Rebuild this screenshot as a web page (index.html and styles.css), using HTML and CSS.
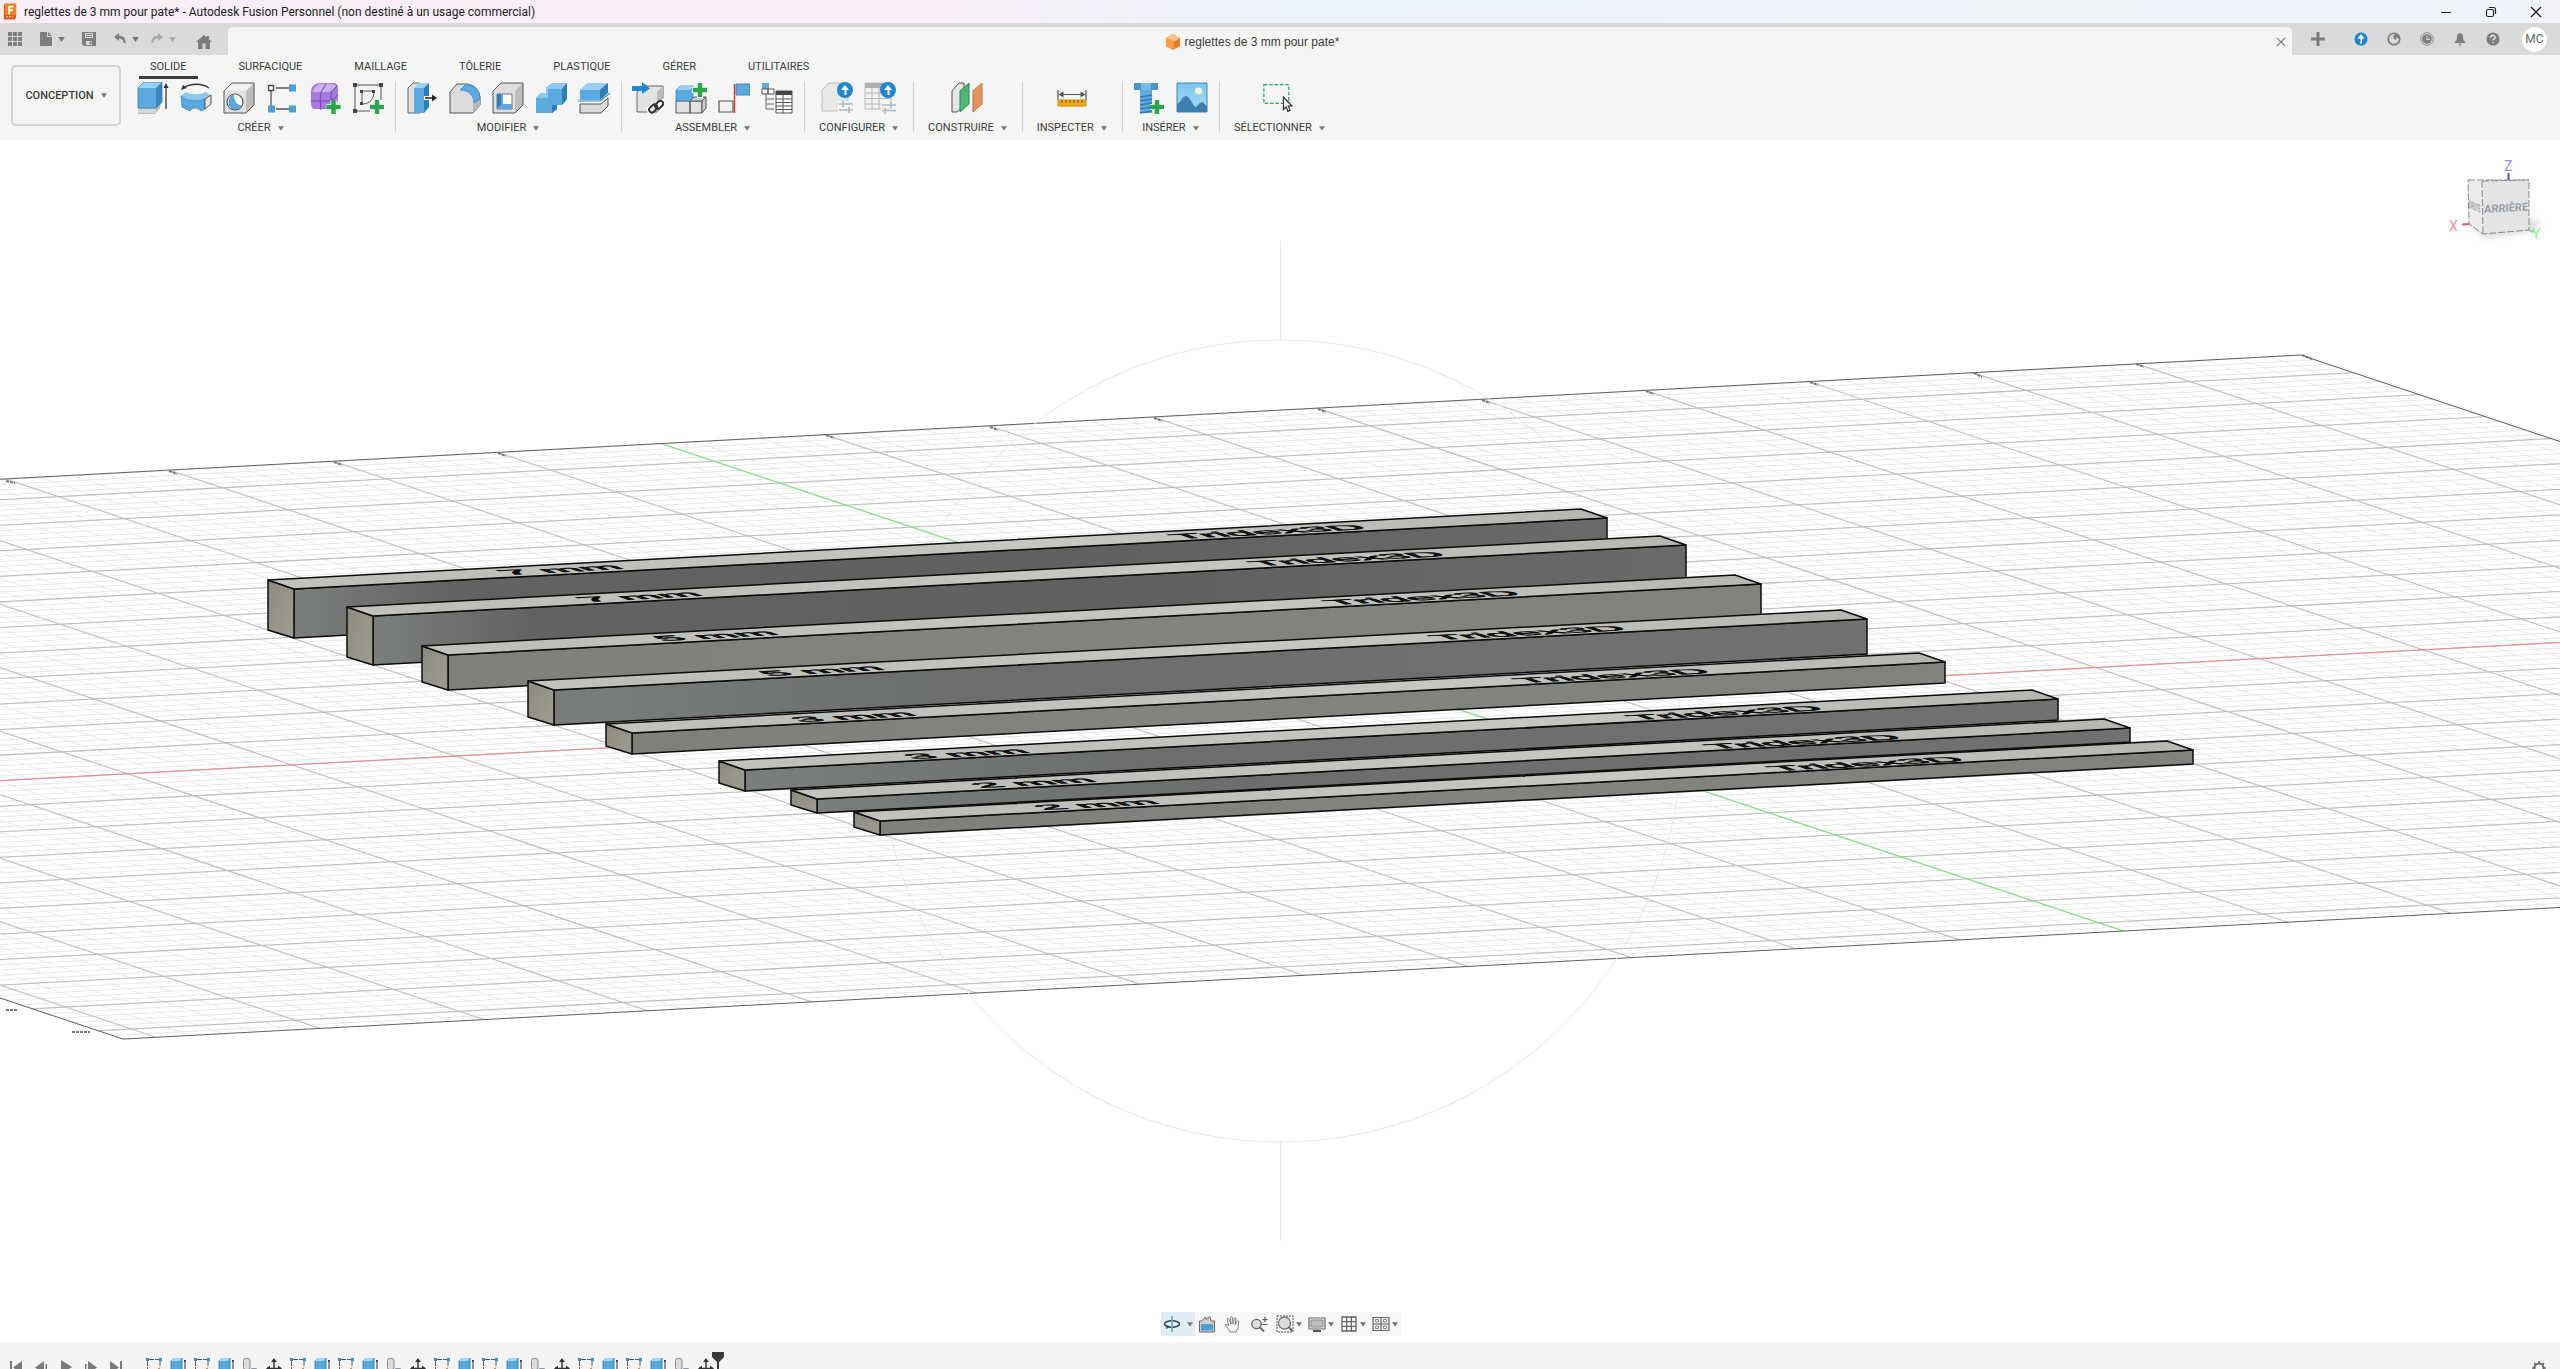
FILE: index.html
```html
<!DOCTYPE html>
<html lang="fr">
<head>
<meta charset="utf-8">
<title>reglettes de 3 mm pour pate* - Autodesk Fusion Personnel</title>
<link rel="stylesheet" href="styles.css">
</head>
<body>
<svg class="defs" aria-hidden="true">
  <defs>
    <linearGradient id="g-top" x1="0" x2="1"><stop offset="0" stop-color="#c4c5c0"/><stop offset=".08" stop-color="#bdbeba"/><stop offset=".6" stop-color="#c6c7c3"/><stop offset="1" stop-color="#b6b7b2"/></linearGradient>
    <linearGradient id="g-end" x1="0" x2="1" y2="1"><stop offset="0" stop-color="#8c8a7e"/><stop offset="1" stop-color="#9f9d92"/></linearGradient>
    <linearGradient id="g-dark" x1="0" x2="1"><stop offset="0" stop-color="#7b7f7b"/><stop offset=".12" stop-color="#626361"/><stop offset=".6" stop-color="#60615f"/><stop offset="1" stop-color="#6a6b69"/></linearGradient>
    <linearGradient id="g-mid" x1="0" x2="1"><stop offset="0" stop-color="#7a7e7a"/><stop offset=".3" stop-color="#6b6e6b"/><stop offset="1" stop-color="#6f726f"/></linearGradient>
    <linearGradient id="g-light" x1="0" x2="1"><stop offset="0" stop-color="#7d807b"/><stop offset=".4" stop-color="#82857f"/><stop offset="1" stop-color="#7f827d"/></linearGradient>
    <linearGradient id="g-img" x2="0" y2="1"><stop offset="0" stop-color="#7cc4f2"/><stop offset="1" stop-color="#a8dcf8"/></linearGradient>
  </defs>
  <symbol id="caret" viewBox="0 0 8 6"><path d="M0 0h8L4 6z" fill="currentColor"/></symbol>
  <symbol id="i-app" viewBox="0 0 16 18"><path d="M2 0h13v16l-2 2H1V2z" fill="#e0561b"/><path d="M2 0h13v13H2z" fill="#f58220"/><path d="M6 2.500h6v2H8V6.500h3.500v2H8V12H6z" fill="#fff"/><path d="M4 15h7" stroke="#fff" stroke-width="1.200" stroke-dasharray="2 1"/></symbol>
  <symbol id="i-grid9" viewBox="0 0 14 14"><path d="M0 0h4v4H0zm5 0h4v4H5zm5 0h4v4h-4zM0 5h4v4H0zm5 0h4v4H5zm5 0h4v4h-4zM0 10h4v4H0zm5 0h4v4H5zm5 0h4v4h-4z" fill="currentColor"/></symbol>
  <symbol id="i-file" viewBox="0 0 14 14"><path d="M1 0h7v5h5v9H1z" fill="currentColor"/><path d="M9 0l4 4H9z" fill="currentColor"/></symbol>
  <symbol id="i-save" viewBox="0 0 14 14"><path d="M0 0h14v14H2l-2-2zM3 1v5h8V1zM4 9v4h6V9z" fill="currentColor" fill-rule="evenodd"/><path d="M4 2.500h6M4 4.500h6M8 10h1v2H8z" stroke="currentColor" fill="none"/></symbol>
  <symbol id="i-undo" viewBox="0 0 14 14"><path d="M1 5l5-4v2.700c4 0 7 2.500 6.500 7.300h-2C10.500 8 9 6.500 6 6.500V9z" fill="currentColor"/></symbol>
  <symbol id="i-redo" viewBox="0 0 14 14"><path d="M13 5L8 1v2.700C4 3.700 1 6.200 1.500 11h2C3.500 8 5 6.500 8 6.500V9z" fill="currentColor"/></symbol>
  <symbol id="i-home" viewBox="0 0 16 14"><path d="M8 0l3 2.500V1h2v3.200L16 7h-2v7H2V7H0z" fill="currentColor"/><path d="M6.500 8.500h3V14h-3z" fill="#dadada"/></symbol>
  <symbol id="i-part" viewBox="0 0 14 16"><path d="M7 0l7 4v8l-7 4-7-4V4z" fill="#f07b1c"/><path d="M7 0l7 4-6 3.500L0 4z" fill="#ffc48a"/><path d="M0 4l8 3.500V16L0 12z" fill="#fb9a48"/></symbol>
  <symbol id="i-x" viewBox="0 0 12 12"><path d="M1 1l10 10M11 1L1 11" stroke="currentColor" stroke-width="1.400" fill="none"/></symbol>
  <symbol id="i-plus" viewBox="0 0 14 14"><path d="M7 0v14M0 7h14" stroke="currentColor" stroke-width="3"/></symbol>
  <symbol id="i-min" viewBox="0 0 12 12"><path d="M1 6.500h10" stroke="currentColor"/></symbol>
  <symbol id="i-max" viewBox="0 0 12 12"><path d="M1.500 5c0-1 .5-1.500 1.500-1.500h4c1 0 1.500.5 1.500 1.500v4c0 1-.5 1.500-1.500 1.500H3c-1 0-1.500-.5-1.500-1.500zM4 1.500h4.500c1.500 0 2 .5 2 2V8" stroke="currentColor" stroke-width="1.200" fill="none"/></symbol>
  <symbol id="i-up" viewBox="0 0 16 16"><circle cx="8" cy="8" r="7.500" fill="#1e86d2"/><path d="M8 2.500l4 5H9.500L9 13H7l.5-5.500H4z" fill="#fff"/></symbol>
  <symbol id="i-ext" viewBox="0 0 16 16"><circle cx="8" cy="8" r="6.500" fill="none" stroke="currentColor" stroke-width="2"/><path d="M8 8l-1-3 3-3 5 3-1 3-3-2-1 3z" fill="currentColor"/></symbol>
  <symbol id="i-clock" viewBox="0 0 16 16"><circle cx="8" cy="8" r="7.200" fill="none" stroke="currentColor"/><circle cx="8" cy="8" r="5.500" fill="currentColor"/><path d="M8 4.500V8.500h3.500" stroke="#dadada" stroke-width="1.400" fill="none"/></symbol>
  <symbol id="i-bell" viewBox="0 0 16 16"><path d="M8 1c3 .5 3.500 3 3.500 5.500 0 2.500 1 3.500 2.500 5v1H2v-1c1.500-1.500 2.500-2.500 2.500-5C4.500 4 5 1.500 8 1zM6 13.500h4L8 16z" fill="currentColor"/></symbol>
  <symbol id="i-help" viewBox="0 0 16 16"><circle cx="8" cy="8" r="7.500" fill="currentColor"/><path d="M5.500 6.500c0-3.500 5-3.500 5-.5 0 1.800-2.400 2-2.400 3.700M8 11v1.800" stroke="#e4e4e4" stroke-width="1.700" fill="none"/></symbol>

  <symbol id="r-extrude" viewBox="0 0 32 32"><path d="M1 27l6-4 17-1-1 4-5 6H1z" fill="#b9b9b9"/><path d="M1 27h18v4H1z" fill="#d6d6d6"/><path d="M1 6l6-6h18l-6 6z" fill="#9bd0f3"/><path d="M1 6h18v20H1z" fill="#5ba9df"/><path d="M19 6l6-6v20l-6 6z" fill="#3a86be"/><path d="M1 6l6-6h18v20l-6 6H1z" fill="none" stroke="#2f7db8" stroke-width=".8"/><path d="M29 27V3" stroke="#333" stroke-width="1.300"/><path d="M26.500 6L29 1l2.500 5z" fill="#333"/></symbol>
  <symbol id="r-revolve" viewBox="0 0 32 32"><path d="M3 6c8-5 19-5 26 0" fill="none" stroke="#333" stroke-width="1.300"/><path d="M1 8l2-5 4 3z" fill="#333"/><path d="M1 14l5-4c6 3 14 3 20 0l6 4-4 4c-7 3-17 3-23 0z" fill="#8cc8f0"/><path d="M1 14c4 3 6 4 10 4.500 4 .8 8 .5 14-1.500v10l-4 2c-4-4-8-4-11 0l-8-4z" fill="#5ba9df" stroke="#3a86be" stroke-width=".7"/><path d="M25 17l6-4v9l-6 5z" fill="#e8e8e8" stroke="#555"/></symbol>
  <symbol id="r-hole" viewBox="0 0 32 32"><path d="M1 9l8-8h22l-8 8z" fill="#f0f0f0"/><path d="M1 9h22v22H1z" fill="#e2e2e2"/><path d="M23 9l8-8v22l-8 8z" fill="#bdbdbd"/><path d="M1 9l8-8h22v22l-8 8H1z" fill="none" stroke="#555"/><circle cx="12" cy="20" r="8" fill="#fff" stroke="#555" stroke-width="1.200"/><path d="M10 13c1 7 4 11 9 11-3 6-12 4-13-3 0-4 2-7 4-8z" fill="#5ba9df" stroke="#2f7db8" stroke-width=".7"/></symbol>
  <symbol id="r-pattern" viewBox="0 0 32 32"><path d="M10 6h14M5 9v15M10 27h14" stroke="#555" stroke-width="1.300"/><path d="M2.500 3.500h5v5h-5z" fill="#fff" stroke="#444" stroke-width="1.300"/><path d="M23 2.500h7v7h-7zM2 23.500h7v7H2zM23 23.500h7v7h-7z" fill="#4a9fd8"/></symbol>
  <symbol id="r-form" viewBox="0 0 32 32"><path d="M2 10c0-6 4-9 9-9h13c4 0 5 2 5 6v12l-6 8H7c-4 0-5-2-5-6z" fill="#a57be0"/><path d="M4 9c2-4 4-7 8-7h11c3 0 4 2 4 3l-6 5H4z" fill="#cdb2f2"/><path d="M2 19h20l7-6M12 28c-1-7-1-12 0-18l5-8M22 27V10l6-6" fill="none" stroke="#6d44a8"/><path d="M24.500 18v14M17.500 25h14" stroke="#fff" stroke-width="6"/><path d="M24.500 18v14M17.500 25h14" stroke="#2da44e" stroke-width="4.500"/></symbol>
  <symbol id="r-sketch" viewBox="0 0 32 32"><path d="M3 3h26M3 3v26M3 29h15M29 3v15" stroke="#555" fill="none"/><path d="M10 9h12c0 8-4 13-12 13z" fill="none" stroke="#555"/><path d="M1 1h4v4H1zM27 1h4v4h-4zM1 27h4v4H1zM8 8h3v3H8zM20 8h3v3h-3zM8 20h3v3H8z" fill="#444"/><path d="M25 18v14M18 25h14" stroke="#fff" stroke-width="6"/><path d="M25 18v14M18 25h14" stroke="#2da44e" stroke-width="4.500"/></symbol>

  <symbol id="r-press" viewBox="0 0 32 32"><path d="M2 6l5-5h7v30H2z" fill="#e0e0e0" stroke="#666"/><path d="M8 6h10v25H8z" fill="#5ba9df"/><path d="M8 6l5-5h10l-5 5z" fill="#9bd0f3"/><path d="M18 6l5-5v24l-5 6z" fill="#2f7db8"/><path d="M18 16h10" stroke="#fff" stroke-width="4"/><path d="M19 16h8" stroke="#222" stroke-width="1.500"/><path d="M26 12.500l5 3.500-5 3.500z" fill="#222"/></symbol>
  <symbol id="r-fillet" viewBox="0 0 32 32"><path d="M1 10l7-8h8c9 0 15 6 15 15v6l-7 8H1z" fill="#dcdcdc" stroke="#555"/><path d="M24 31l7-8v-6l-7 2z" fill="#b7b7b7"/><path d="M11 8l6-6c8 1 14 7 14 15l-6 4c0-7-5-13-14-13z" fill="#5ba9df" stroke="#3a86be" stroke-width=".7"/></symbol>
  <symbol id="r-shell" viewBox="0 0 32 32"><path d="M1 9l8-8h22v22l-8 8H1z" fill="#dedede"/><path d="M23 9l8-8v22l-8 8z" fill="#bcbcbc"/><path d="M1 9l8-8h22v22l-8 8H1z" fill="none" stroke="#555"/><path d="M5 12h15v15H5z" fill="#fff" stroke="#777"/><path d="M5 12h6v10h9v5H5z" fill="#5ba9df"/><path d="M5 12h4v10l-4 5z" fill="#2f7db8"/></symbol>
  <symbol id="r-combine" viewBox="0 0 32 32"><path d="M1 16l5-5h5V6l6-5h15v16l-5 6h-5v4l-5 4H1z" fill="#4f9fd6"/><path d="M1 16l5-5h5V6l6-5h15l-5 6H13v9z" fill="#8cc8f0"/><path d="M27 7l5-6v16l-5 6h-5v4l-5 4v-8h5z" fill="#2f7db8"/><path d="M13 7h14v16H17v8H1V16h12z" fill="#5ba9df"/></symbol>
  <symbol id="r-split" viewBox="0 0 32 32"><path d="M2 8l8-7h20v10l-8 7H2z" fill="#5ba9df"/><path d="M2 8l8-7h20l-8 7z" fill="#9bd0f3"/><path d="M22 8l8-7v10l-8 7z" fill="#2f7db8"/><path d="M1 20h21l9-8" fill="none" stroke="#fff" stroke-width="3"/><path d="M0 19h22l10-8" fill="none" stroke="#2f7db8" stroke-width="1.200"/><path d="M2 22h21l7-6v8l-7 7H2z" fill="#dadada" stroke="#555"/></symbol>

  <symbol id="r-insert" viewBox="0 0 32 32"><path d="M5 10l7-6h19v19l-6 7H5z" fill="#e2e2e2" stroke="#666"/><path d="M25 10l6-6v19l-6 7z" fill="#bbb"/><path d="M0 4h10V0l8 6.500L10 12V9H0z" fill="#1e86d2"/><g fill="none" stroke="#fff" stroke-width="5"><path d="M22 30l-4 1-1-4 5-5M26 24l5-4 1 4-5 4"/></g><g fill="none" stroke="#333" stroke-width="2"><rect x="17" y="24" width="9" height="5.500" rx="2.700" transform="rotate(-45 21 27)"/><rect x="22" y="20" width="9" height="5.500" rx="2.700" transform="rotate(-45 27 22)"/></g></symbol>
  <symbol id="r-newcomp" viewBox="0 0 32 32"><path d="M1 19h14v12H1zM15 19h12v12H15z" fill="#e2e2e2" stroke="#555"/><path d="M15 19l4-4h12l-4 4zM27 19l4-4v11l-4 5z" fill="#cfcfcf" stroke="#555"/><path d="M1 8l4-4h13v11l-3 4H1z" fill="#5ba9df" stroke="#2f7db8" stroke-width=".7"/><path d="M1 8l4-4h13l-3 4z" fill="#9bd0f3"/><path d="M25 0v16M17 8h16" stroke="#fff" stroke-width="6"/><path d="M25 1v14M18 8h14" stroke="#2da44e" stroke-width="4.500"/></symbol>
  <symbol id="r-joint" viewBox="0 0 32 32"><path d="M1 19h14v11H1z" fill="#f4f4f4" stroke="#555" stroke-width="1.200"/><path d="M18 2h14v11H18z" fill="#5ba9df" stroke="#3a86be"/><path d="M16.500 2v29" stroke="#e03a3a" stroke-width="1.500"/></symbol>
  <symbol id="r-bom" viewBox="0 0 32 32"><path d="M1 1h7v6H1z" fill="#5ba9df"/><path d="M1 7h6v5H1zM7 7h6v5H7z" fill="#fff" stroke="#555"/><path d="M5 12v15M5 17h8M5 22h8M5 27h8" stroke="#666" fill="none"/><path d="M15 9h16v22H15z" fill="#fff" stroke="#555"/><path d="M15 9h16v4H15z" fill="#444"/><path d="M15 17h16M15 20.500h16M15 24h16M15 27.500h16M22 13v18" stroke="#555" fill="none"/></symbol>

  <symbol id="r-config" viewBox="0 0 32 32"><path d="M1 8l7-7h19v22l-5 6H1z" fill="#e8e8e8" stroke="#bbb"/><path d="M17 22h15M17 28h15" stroke="#f5f5f5" stroke-width="6"/><path d="M18 22h14M18 28h14M22 19v6M28 25v6" stroke="#a9b8c2" stroke-width="1.600"/><circle cx="24" cy="8" r="8" fill="#1e86d2"/><path d="M24 3l4 5h-2.500v5h-2V8H20z" fill="#fff"/></symbol>
  <symbol id="r-table" viewBox="0 0 32 32"><path d="M1 1h26v26H1z" fill="#f2f2f2" stroke="#bbb"/><path d="M1 1h26v5H1z" fill="#b0b0b0"/><path d="M1 11h26M1 16.500h26M1 22h18M8 6v21M15 6v21" stroke="#b5b5b5"/><path d="M17 23h15M17 29h15" stroke="#f5f5f5" stroke-width="5"/><path d="M18 23h14M18 28.500h14M27 20v6M21 26v6" stroke="#a9b8c2" stroke-width="1.600"/><circle cx="24" cy="8" r="8" fill="#1e86d2"/><path d="M24 3l4 5h-2.500v5h-2V8H20z" fill="#fff"/></symbol>
  <symbol id="r-plane" viewBox="0 0 32 32"><path d="M1 9l7-8h5v22l-7 7H1z" fill="#e6e6e6" stroke="#555"/><path d="M9 9l9-8v21l-9 8z" fill="#4db679" stroke="#2d8a55"/><path d="M22 9l9-8v21l-9 8z" fill="#e59461" stroke="#c2703c"/></symbol>
  <symbol id="r-measure" viewBox="0 0 32 32"><path d="M2 8v10M30 8v10M4 12.500h24" stroke="#555" stroke-width="1.200"/><path d="M2.500 12.500l5-3v6zM29.500 12.500l-5-3v6z" fill="#555"/><path d="M2 18h28v6H2z" fill="#f4a81d" stroke="#d18600"/><path d="M6 18v3M10 18v3M14 18v3M18 18v3M22 18v3M26 18v3" stroke="#7a4d00"/></symbol>
  <symbol id="r-bolt" viewBox="0 0 32 32"><path d="M1 1h24v7H1z" fill="#4a94cb"/><path d="M8 1h10v7H8z" fill="#7ab9e6"/><path d="M7 8h12v23H7z" fill="#5ba9df"/><path d="M7 15l12-2M7 19l12-2M7 23l12-2M7 27l12-2M7 31l12-2" stroke="#2f7db8" stroke-width="1.300"/><path d="M24 18v14M17 25h15" stroke="#fff" stroke-width="6"/><path d="M24 18v14M17 25h14" stroke="#2da44e" stroke-width="4.500"/></symbol>
  <symbol id="r-image" viewBox="0 0 32 32"><path d="M1 1h30v29H1z" fill="url(#g-img)" stroke="#3a86be"/><circle cx="22.500" cy="9" r="3.500" fill="#fdf6c8"/><path d="M1 22c4-1 5-8 9-8s6 9 10 11l4-4c3-2 4 1 7 3v6H1z" fill="#3c7fb0"/></symbol>
  <symbol id="r-select" viewBox="0 0 36 32"><path d="M1 1h28v21H1z" fill="none" stroke="#2fa36b" stroke-width="1.400" stroke-dasharray="4 2"/><path d="M23 15v14l3-3 2 5 2.500-1-2-5h4z" fill="#fff" stroke="#333" stroke-width="1.400"/></symbol>

  <symbol id="n-orbit" viewBox="0 0 18 18"><ellipse cx="9" cy="9" rx="7.500" ry="3.200" fill="none" stroke="#444" stroke-width="1.500"/><path d="M9 1v16" stroke="#5ba9df" stroke-width="1.600"/><path d="M3 14l1-4 3 2z" fill="#444"/></symbol>
  <symbol id="n-look" viewBox="0 0 18 18"><path d="M1.500 6h2l4-4 .5 2.500L12 1.500 13 6h3.500v11h-15z" fill="#d0d0d0" stroke="#666"/><path d="M3 9h12v6.500H3z" fill="#4f9fd6"/></symbol>
  <symbol id="n-hand" viewBox="0 0 18 18"><path d="M6 17c-1-3-3-5-5-7 1-1.500 3 0 4 1L3 4c1-1 2 0 2.500 1l1.500 4-.5-7c1-1 2 0 2 1l.5 6 1.500-6c1-.5 1.800.3 1.500 1.300l-1 5.500 2.500-4c1-.5 1.600.4 1.300 1.200L14 13l-2 4z" fill="#f4f4f4" stroke="#777" stroke-width=".9"/></symbol>
  <symbol id="n-zoom" viewBox="0 0 18 18"><circle cx="6.500" cy="9" r="4.700" fill="#ddd" stroke="#666" stroke-width="1.300"/><path d="M10 12.500l4 4" stroke="#666" stroke-width="2"/><path d="M15 2v5M12.500 4.500h5M12.500 9.500h5" stroke="#555" stroke-width="1.200"/></symbol>
  <symbol id="n-fit" viewBox="0 0 18 18"><path d="M1 1h16v16H1z" fill="none" stroke="#555" stroke-dasharray="2 1"/><circle cx="8.500" cy="8" r="6" fill="#ddd" stroke="#777" stroke-width="1.300"/><path d="M12.500 12l4 4" stroke="#666" stroke-width="2"/></symbol>
  <symbol id="n-screen" viewBox="0 0 18 18"><path d="M1 3h16v11H1z" fill="#f0f0f0" stroke="#666" stroke-width="1.200"/><path d="M3 5h12v7H3z" fill="#bdbdbd" stroke="#888"/><path d="M5 16h8" stroke="#555" stroke-width="2"/></symbol>
  <symbol id="n-grid" viewBox="0 0 18 18"><path d="M2 2h14v14H2zM2 6.700h14M2 11.300h14M6.700 2v14M11.300 2v14" fill="none" stroke="#666" stroke-width="1.300"/></symbol>
  <symbol id="n-views" viewBox="0 0 18 18"><path d="M1 2.500h16v13H1zM9 2.500v13M1 9h16" fill="#f3f3f3" stroke="#666" stroke-width="1.200"/><path d="M3.500 4.500h3v2.500h-3zM11.500 4.500h3v2.500h-3zM3.500 11h3v2.500h-3zM11.500 11h3v2.500h-3z" fill="none" stroke="#888"/></symbol>

  <symbol id="t-sketch" viewBox="0 0 16 16"><path d="M3 1.500h10M1.500 3v12M14 3v6" stroke="#555" stroke-dasharray="5 1" fill="none"/><path d="M0 0h3v3H0zM13 0h3v3h-3z" fill="#3c8fb8"/><path d="M10 16l3-7 2 4v3z" fill="#e05a3a"/></symbol>
  <symbol id="t-extrude" viewBox="0 0 16 16"><path d="M1 3l3-3h8v13l-3 3H1z" fill="#5ba9df" stroke="#2f6f9f" stroke-width=".8"/><path d="M1 3l3-3h8L9 3z" fill="#a8d8f6"/><path d="M15 16V2M14 4l1-2 1 2" stroke="#333" fill="none"/></symbol>
  <symbol id="t-copy" viewBox="0 0 16 16"><rect x="1.500" y=".5" width="6.500" height="11" rx="2" fill="#ddd" stroke="#888"/><path d="M4.500 11.500h4V16h-4zM9.500 10.500h5V16h-5z" fill="#eee" stroke="#8a96a5"/></symbol>
  <symbol id="t-move" viewBox="0 0 16 16"><path d="M8 2v14M1 10.500h14" stroke="#333" stroke-width="1.500"/><path d="M8 0l3 4H5zM0 10.500l4-3v6zM16 10.500l-4-3v6z" fill="#333"/></symbol>
  <symbol id="i-gear" viewBox="0 0 16 16"><circle cx="8" cy="8" r="4.500" fill="none" stroke="currentColor" stroke-width="2"/><path d="M8 1v14M1 8h14M3 3l10 10M13 3L3 13" stroke="currentColor" stroke-width="1.600" stroke-dasharray="2 10 2"/></symbol>
</svg>

<header class="titlebar">
  <svg class="app-icon"><use href="#i-app"/></svg>
  <h1 class="title">reglettes de 3 mm pour pate* - Autodesk Fusion Personnel (non destiné à un usage commercial)</h1>
  <div class="window-controls">
    <button aria-label="Réduire"><svg><use href="#i-min"/></svg></button>
    <button aria-label="Restaurer"><svg><use href="#i-max"/></svg></button>
    <button aria-label="Fermer"><svg><use href="#i-x"/></svg></button>
  </div>
</header>

<div class="quickbar">
  <div class="quick-tools">
    <button aria-label="Panneau de données"><svg><use href="#i-grid9"/></svg></button>
    <button class="with-caret" aria-label="Fichier"><svg><use href="#i-file"/></svg><svg class="caret"><use href="#caret"/></svg></button>
    <button aria-label="Enregistrer"><svg><use href="#i-save"/></svg></button>
    <button class="with-caret" aria-label="Annuler"><svg><use href="#i-undo"/></svg><svg class="caret"><use href="#caret"/></svg></button>
    <button class="with-caret faded" aria-label="Rétablir"><svg><use href="#i-redo"/></svg><svg class="caret"><use href="#caret"/></svg></button>
    <button class="home" aria-label="Accueil"><svg><use href="#i-home"/></svg></button>
  </div>
  <div class="doc-tab">
    <svg class="part-icon"><use href="#i-part"/></svg>
    <span>reglettes de 3 mm pour pate*</span>
    <button class="tab-close" aria-label="Fermer le document"><svg><use href="#i-x"/></svg></button>
  </div>
  <div class="account-tools">
    <button aria-label="Nouveau document"><svg><use href="#i-plus"/></svg></button>
    <button aria-label="Mises à jour"><svg><use href="#i-up"/></svg></button>
    <button aria-label="Extensions"><svg><use href="#i-ext"/></svg></button>
    <button aria-label="État des tâches"><svg><use href="#i-clock"/></svg></button>
    <button aria-label="Notifications"><svg><use href="#i-bell"/></svg></button>
    <button aria-label="Aide"><svg><use href="#i-help"/></svg></button>
    <button class="avatar">MC</button>
  </div>
</div>

<section class="ribbon">
  <button class="workspace">CONCEPTION<svg class="caret"><use href="#caret"/></svg></button>
  <div class="ribbon-main">
    <nav class="tabs">
      <button class="tab active">SOLIDE</button>
      <button class="tab">SURFACIQUE</button>
      <button class="tab">MAILLAGE</button>
      <button class="tab">TÔLERIE</button>
      <button class="tab">PLASTIQUE</button>
      <button class="tab">GÉRER</button>
      <button class="tab">UTILITAIRES</button>
    </nav>
    <div class="groups">
      <div class="group">
        <div class="tools">
          <button aria-label="Extrusion"><svg><use href="#r-extrude"/></svg></button>
          <button aria-label="Révolution"><svg><use href="#r-revolve"/></svg></button>
          <button aria-label="Perçage"><svg><use href="#r-hole"/></svg></button>
          <button aria-label="Réseau"><svg><use href="#r-pattern"/></svg></button>
          <button aria-label="Créer une forme"><svg><use href="#r-form"/></svg></button>
          <button aria-label="Créer une esquisse"><svg><use href="#r-sketch"/></svg></button>
        </div>
        <button class="menu">CRÉER<svg class="caret"><use href="#caret"/></svg></button>
      </div>
      <div class="group">
        <div class="tools">
          <button aria-label="Appuyer/Tirer"><svg><use href="#r-press"/></svg></button>
          <button aria-label="Congé"><svg><use href="#r-fillet"/></svg></button>
          <button aria-label="Coque"><svg><use href="#r-shell"/></svg></button>
          <button aria-label="Combiner"><svg><use href="#r-combine"/></svg></button>
          <button aria-label="Scinder"><svg><use href="#r-split"/></svg></button>
        </div>
        <button class="menu">MODIFIER<svg class="caret"><use href="#caret"/></svg></button>
      </div>
      <div class="group">
        <div class="tools">
          <button aria-label="Insérer un composant"><svg><use href="#r-insert"/></svg></button>
          <button aria-label="Nouveau composant"><svg><use href="#r-newcomp"/></svg></button>
          <button aria-label="Liaison"><svg><use href="#r-joint"/></svg></button>
          <button aria-label="Nomenclature"><svg><use href="#r-bom"/></svg></button>
        </div>
        <button class="menu">ASSEMBLER<svg class="caret"><use href="#caret"/></svg></button>
      </div>
      <div class="group">
        <div class="tools">
          <button aria-label="Configurer"><svg><use href="#r-config"/></svg></button>
          <button aria-label="Table de configuration"><svg><use href="#r-table"/></svg></button>
        </div>
        <button class="menu">CONFIGURER<svg class="caret"><use href="#caret"/></svg></button>
      </div>
      <div class="group">
        <div class="tools"><button aria-label="Plan décalé"><svg><use href="#r-plane"/></svg></button></div>
        <button class="menu">CONSTRUIRE<svg class="caret"><use href="#caret"/></svg></button>
      </div>
      <div class="group">
        <div class="tools"><button aria-label="Mesurer"><svg><use href="#r-measure"/></svg></button></div>
        <button class="menu">INSPECTER<svg class="caret"><use href="#caret"/></svg></button>
      </div>
      <div class="group">
        <div class="tools">
          <button aria-label="Insérer une attache"><svg><use href="#r-bolt"/></svg></button>
          <button aria-label="Insérer une image"><svg><use href="#r-image"/></svg></button>
        </div>
        <button class="menu">INSÉRER<svg class="caret"><use href="#caret"/></svg></button>
      </div>
      <div class="group">
        <div class="tools"><button aria-label="Sélectionner"><svg><use href="#r-select"/></svg></button></div>
        <button class="menu">SÉLECTIONNER<svg class="caret"><use href="#caret"/></svg></button>
      </div>
    </div>
  </div>
</section>

<main class="viewport">
  <svg class="scene" viewBox="0 140 2560 1202" preserveAspectRatio="xMidYMid slice" role="img" aria-label="Réglettes Tridex3D sur la grille">
    <!-- Ground grid: one unit is one major square; each stripe set is a wide dashed line -->
    <g transform="matrix(163.96 -8.854 65.94 21.98 1439 702.9)" fill="none">
      <path d="M-12.200 -.7H10" stroke="#ececec" stroke-width="22.180" stroke-dasharray=".016 .184"/>
      <path d="M-1.100 -11.800V10.380" stroke="#e8e8e8" stroke-width="22.200" stroke-dasharray=".036 .164"/>
      <path d="M-12.008 -.7H10" stroke="#bdbdbd" stroke-width="22.180" stroke-dasharray=".016 .984"/>
      <path d="M-1.100 -11.018V10.380" stroke="#bdbdbd" stroke-width="22.200" stroke-dasharray=".040 .960"/>
      <g class="hairline">
        <path d="M-12.200 0H10" stroke="#f08a90"/>
        <path d="M0 -11.800V10.380" stroke="#7be87b"/>
        <path d="M-12.200 -11.800H10V10.380H-12.200z" stroke="#606060"/>
      </g>
    </g>
    <!-- Tick labels along the grid border -->
    <path d="M6 481l9 2M169 471l8 3M334 462l8 3M498 453l8 3M826 435l8 3M990 427l8 3M1154 418l8 3M1318 409l8 3M1482 400l8 3M1646 391l8 3M1810 382l8 3M1974 373l8 4M2136 364l8 3M2302 355l10 4M6 1010h12M72 1032h18" stroke="#777" stroke-width="2" stroke-dasharray="3 1"/>
    <!-- Orbit ring -->
    <g fill="none" stroke="#e9e9e9"><circle cx="1280" cy="741" r="401"/><path d="M1280.500 241v99M1280.500 1142v99"/></g>

    <g stroke="#0c0c0c" stroke-width="1.500" stroke-linejoin="round">
      <g transform="translate(268 580)">
        <path d="M26 9l1313-71v49L26 58z" fill="url(#g-dark)"/><path d="M0 0l26 9v49L0 50z" fill="url(#g-end)"/><path d="M0 0l1313-71 26 9L26 9z" fill="url(#g-top)"/>
        <text class="engraved" transform="matrix(1 -.054 .402 .134 240 -5)">7 mm</text><text class="engraved" transform="matrix(1 -.054 .402 .134 912 -41)">Tridex3D</text>
      </g>
      <g transform="translate(347 607)">
        <path d="M26 9l1313-71v49L26 58z" fill="url(#g-dark)"/><path d="M0 0l26 9v49L0 50z" fill="url(#g-end)"/><path d="M0 0l1313-71 26 9L26 9z" fill="url(#g-top)"/>
        <text class="engraved" transform="matrix(1 -.054 .402 .134 240 -5)">7 mm</text><text class="engraved" transform="matrix(1 -.054 .402 .134 912 -41)">Tridex3D</text>
      </g>
      <g transform="translate(422 646)">
        <path d="M26 9l1313-71v35L26 44z" fill="url(#g-light)"/><path d="M0 0l26 9v35L0 36z" fill="url(#g-end)"/><path d="M0 0l1313-71 26 9L26 9z" fill="url(#g-top)"/>
        <text class="engraved" transform="matrix(1 -.054 .402 .134 241 -5)">5 mm</text><text class="engraved" transform="matrix(1 -.054 .402 .134 912 -41)">Tridex3D</text>
      </g>
      <g transform="translate(528 681)">
        <path d="M26 9l1313-71v35L26 44z" fill="url(#g-mid)"/><path d="M0 0l26 9v35L0 36z" fill="url(#g-end)"/><path d="M0 0l1313-71 26 9L26 9z" fill="url(#g-top)"/>
        <text class="engraved" transform="matrix(1 -.054 .402 .134 241 -5)">5 mm</text><text class="engraved" transform="matrix(1 -.054 .402 .134 912 -41)">Tridex3D</text>
      </g>
      <g transform="translate(606 724)">
        <path d="M26 9l1313-71v21L26 30z" fill="url(#g-light)"/><path d="M0 0l26 9v21L0 22z" fill="url(#g-end)"/><path d="M0 0l1313-71 26 9L26 9z" fill="url(#g-top)"/>
        <text class="engraved" transform="matrix(1 -.054 .402 .134 195 -2)">3 mm</text><text class="engraved" transform="matrix(1 -.054 .402 .134 918 -41)">Tridex3D</text>
      </g>
      <g transform="translate(719 761)">
        <path d="M26 9l1313-71v21L26 30z" fill="url(#g-mid)"/><path d="M0 0l26 9v21L0 22z" fill="url(#g-end)"/><path d="M0 0l1313-71 26 9L26 9z" fill="url(#g-top)"/>
        <text class="engraved" transform="matrix(1 -.054 .402 .134 195 -2)">3 mm</text><text class="engraved" transform="matrix(1 -.054 .402 .134 918 -41)">Tridex3D</text>
      </g>
      <g transform="translate(791 790)">
        <path d="M26 9l1313-71v14L26 23z" fill="url(#g-mid)"/><path d="M0 0l26 9v14L0 15z" fill="url(#g-end)"/><path d="M0 0l1313-71 26 9L26 9z" fill="url(#g-top)"/>
        <text class="engraved" transform="matrix(1 -.054 .402 .134 190 -2)">2 mm</text><text class="engraved" transform="matrix(1 -.054 .402 .134 924 -41)">Tridex3D</text>
      </g>
      <g transform="translate(854 812)">
        <path d="M26 9l1313-71v14L26 23z" fill="url(#g-light)"/><path d="M0 0l26 9v14L0 15z" fill="url(#g-end)"/><path d="M0 0l1313-71 26 9L26 9z" fill="url(#g-top)"/>
        <text class="engraved" transform="matrix(1 -.054 .402 .134 190 -2)">2 mm</text><text class="engraved" transform="matrix(1 -.054 .402 .134 924 -41)">Tridex3D</text>
      </g>
    </g>
  </svg>

  <svg class="viewcube" viewBox="0 0 120 120" role="img" aria-label="Cube de visualisation">
    <path d="M30 84l14 14 46-6 12-10-20-4z" fill="#000" opacity=".14" class="soft"/>
    <path d="M28 40l14 1 1 53-14-10z" fill="#eaebed"/>
    <path d="M42 41h47v49l-46 4z" fill="#e2e4e6"/>
    <path d="M28 40h61v50l-46 4-14-10zM42 41l1 53M42 41l47-1" fill="none" stroke="#888" stroke-dasharray="7 2"/>
    <path d="M68.500 33v7" stroke="#5a4fd0" stroke-width="2"/><path d="M22 84.500l7-.5" stroke="#e0556a" stroke-width="2"/><path d="M89 90l5 2" stroke="#7fe38f" stroke-width="2"/>
    <text x="64" y="31" fill="#9a90f0" class="axis">Z</text><text x="9" y="91" fill="#f09098" class="axis">X</text><text x="92" y="99" fill="#8df09a" class="axis">Y</text>
    <text transform="matrix(1 -.060 0 1 44 73)" class="face">ARRIÈRE</text>
    <text transform="matrix(.3 .130 0 1 29 68)" class="face">DROITE</text>
  </svg>

  <div class="navbar">
    <button class="nav-item on" aria-label="Orbite"><svg><use href="#n-orbit"/></svg><svg class="caret"><use href="#caret"/></svg></button>
    <button class="nav-item" aria-label="Regarder"><svg><use href="#n-look"/></svg></button>
    <button class="nav-item" aria-label="Panoramique"><svg><use href="#n-hand"/></svg></button>
    <button class="nav-item" aria-label="Zoom"><svg><use href="#n-zoom"/></svg></button>
    <button class="nav-item" aria-label="Ajuster"><svg><use href="#n-fit"/></svg><svg class="caret"><use href="#caret"/></svg></button>
    <button class="nav-item" aria-label="Affichage"><svg><use href="#n-screen"/></svg><svg class="caret"><use href="#caret"/></svg></button>
    <button class="nav-item" aria-label="Grille"><svg><use href="#n-grid"/></svg><svg class="caret"><use href="#caret"/></svg></button>
    <button class="nav-item" aria-label="Fenêtres"><svg><use href="#n-views"/></svg><svg class="caret"><use href="#caret"/></svg></button>
  </div>
</main>

<footer class="timeline">
  <div class="playback">
    <button aria-label="Début"><svg viewBox="0 0 14 14"><path d="M1 1h2v13H1zM13 1v13L4 7.500z"/></svg></button>
    <button aria-label="Précédent"><svg viewBox="0 0 14 14"><path d="M10 1v13L1 7.500zM11.500 4H13v7h-1.500z"/></svg></button>
    <button aria-label="Lecture"><svg viewBox="0 0 14 14"><path d="M2 0l11 7-11 7z"/></svg></button>
    <button aria-label="Suivant"><svg viewBox="0 0 14 14"><path d="M4 1v13l9-6.500zM1 4h1.500v7H1z"/></svg></button>
    <button aria-label="Fin"><svg viewBox="0 0 14 14"><path d="M11 1h2v13h-2zM1 1v13l9-6.500z"/></svg></button>
  </div>
  <div class="features">
    <svg><use href="#t-sketch"/></svg><svg><use href="#t-extrude"/></svg><svg><use href="#t-sketch"/></svg><svg><use href="#t-extrude"/></svg><svg><use href="#t-copy"/></svg><svg><use href="#t-move"/></svg>
    <svg><use href="#t-sketch"/></svg><svg><use href="#t-extrude"/></svg><svg><use href="#t-sketch"/></svg><svg><use href="#t-extrude"/></svg><svg><use href="#t-copy"/></svg><svg><use href="#t-move"/></svg>
    <svg><use href="#t-sketch"/></svg><svg><use href="#t-extrude"/></svg><svg><use href="#t-sketch"/></svg><svg><use href="#t-extrude"/></svg><svg><use href="#t-copy"/></svg><svg><use href="#t-move"/></svg>
    <svg><use href="#t-sketch"/></svg><svg><use href="#t-extrude"/></svg><svg><use href="#t-sketch"/></svg><svg><use href="#t-extrude"/></svg><svg><use href="#t-copy"/></svg><svg><use href="#t-move"/></svg>
    <svg class="marker" viewBox="0 0 12 24"><path d="M0 0h12v5L7 10v14H5V10L0 5z" fill="#3a3a3a"/></svg>
  </div>
  <button class="settings" aria-label="Paramètres"><svg><use href="#i-gear"/></svg></button>
</footer>
</body>
</html>
```

FILE: styles.css
```css
* { box-sizing: border-box; }

html, body { height: 100%; margin: 0; }

body {
  display: flex;
  flex-direction: column;
  overflow: hidden;
  background: #fff;
  color: #3c3c3c;
  font: 11px/16px Roboto, "Liberation Sans", sans-serif;
}

button {
  display: flex;
  align-items: center;
  justify-content: center;
  margin: 0;
  padding: 0;
  border: 0;
  background: none;
  color: inherit;
  font: inherit;
}

svg { display: block; flex: none; }
.defs { position: absolute; width: 0; height: 0; }
.caret { width: 6px; height: 5px; color: #777; }

/* Title bar */
.titlebar {
  display: flex;
  align-items: center;
  flex: none;
  height: 23px;
  padding: 0 2px 0 3px;
  background: linear-gradient(90deg, #f9eef8 0, #f9eef8 35%, #ecf3f8 50%, #eef3f8 80%, #f1f3f9 100%);
}
.app-icon { width: 14px; height: 17px; }
.title {
  margin: 0 0 0 7px;
  color: #1c1c1c;
  font: 12px/20px Roboto, "Noto Sans", sans-serif;
}
.window-controls { display: flex; margin-left: auto; color: #222; }
.window-controls button { width: 45px; height: 20px; }
.window-controls svg { width: 12px; height: 12px; }

/* Quick access and document tab */
.quickbar {
  display: flex;
  flex: none;
  height: 32px;
  background: #dadada;
  color: #7d7d7d;
}
.quick-tools {
  display: flex;
  align-items: center;
  gap: 17px;
  width: 228px;
  padding-left: 8px;
}
.quick-tools svg { width: 14px; height: 14px; }
.quick-tools .caret { width: 7px; height: 5px; }
.with-caret { gap: 5px; }
.with-caret:nth-child(4) { margin-right: -6px; }
.faded { opacity: .5; }
.home { padding-top: 6px; }
.quick-tools .home svg { width: 16px; margin-left: 3px; }
.doc-tab {
  display: flex;
  flex: 1;
  align-items: center;
  justify-content: center;
  gap: 5px;
  margin-top: 4px;
  padding: 2px 15px 0 0;
  border-radius: 5px 5px 0 0;
  background: #f5f5f5;
  color: #3c3c3c;
  font: 12px/16px "Liberation Sans", Arial, sans-serif;
}
.part-icon { width: 14px; height: 16px; }
.tab-close { position: absolute; right: 274px; color: #777; }
.tab-close svg { width: 10px; height: 10px; }
.account-tools { display: flex; align-items: center; width: 268px; padding-left: 9px; }
.account-tools button { width: 33px; }
.account-tools button:first-child { margin-right: 10px; }
.account-tools svg { width: 14px; height: 14px; }
.account-tools .avatar {
  width: 25px;
  height: 25px;
  margin-left: 13px;
  border-radius: 50%;
  background: #fff;
  color: #666;
  font-size: 12px;
}

/* Ribbon */
.ribbon {
  display: flex;
  flex: none;
  height: 85px;
  background: #f5f5f5;
}
.workspace {
  gap: 7px;
  width: 110px;
  height: 61px;
  margin: 10px 6px 0 11px;
  border: 2px solid #d4d4d4;
  border-radius: 5px;
  font-weight: 500;
}
.tabs { display: flex; gap: 30px; height: 27px; padding: 3px 0 3px 12px; }
.tab { height: 21px; padding: 2px 11px 3px; border-bottom: 3px solid transparent; }
.tab.active { border-color: #3c3c3c; }
.groups { display: flex; }
.group {
  display: flex;
  flex-direction: column;
  align-items: center;
  height: 50px;
  padding: 0 11px 0 10px;
  border-right: 1px solid #d2d2d2;
}
.group:last-child { border: 0; }
.tools { display: flex; gap: 11px; }
.tools svg { width: 32px; height: 32px; }
.menu { gap: 7px; padding: 6px 4px 0; }

/* Modelling canvas */
.viewport { position: relative; flex: 1; min-height: 0; overflow: hidden; }
.scene { width: 100%; height: 100%; }
.hairline path { stroke-width: 1px; vector-effect: non-scaling-stroke; }
.engraved {
  fill: #1a1a1a;
  stroke: #0c0c0c;
  stroke-width: 3px;
  font: 47px "Liberation Sans", Arial, sans-serif;
}
.viewcube { position: absolute; top: 0; right: 0; width: 120px; height: 120px; }
.soft { filter: blur(3px); }
.axis { font: 14px Roboto, sans-serif; }
.face { fill: #9b9ea2; font: bold 11px Roboto, sans-serif; }

.navbar {
  position: absolute;
  bottom: 6px;
  left: 50%;
  display: flex;
  gap: 8px;
  width: 240px;
  height: 24px;
  margin-left: -119px;
  background: #f7f7f7;
}
.nav-item { gap: 2px; }
.nav-item svg { width: 18px; height: 18px; }
.nav-item .caret { width: 6px; height: 5px; }
.nav-item.on { gap: 6px; width: 34px; margin-right: -5px; background: #e0edf4; }
.nav-item:nth-child(n+6) { margin-left: -2px; }

/* Timeline */
.timeline {
  display: flex;
  flex: none;
  align-items: flex-start;
  height: 27px;
  padding: 16px 13px 0 9px;
  overflow: hidden;
  background: #f4f4f4;
}
.playback { display: flex; gap: 11px; padding-top: 2px; }
.playback svg { width: 14px; height: 14px; fill: #7a7a7a; }
.features { display: flex; gap: 8px; margin-left: 23px; }
.features svg { width: 16px; height: 16px; }
.features .marker { width: 12px; height: 24px; margin: -6px 0 0 -10px; }
.settings { margin-left: auto; padding-top: 2px; color: #6a6a6a; }
.settings svg { width: 16px; height: 16px; }
```
